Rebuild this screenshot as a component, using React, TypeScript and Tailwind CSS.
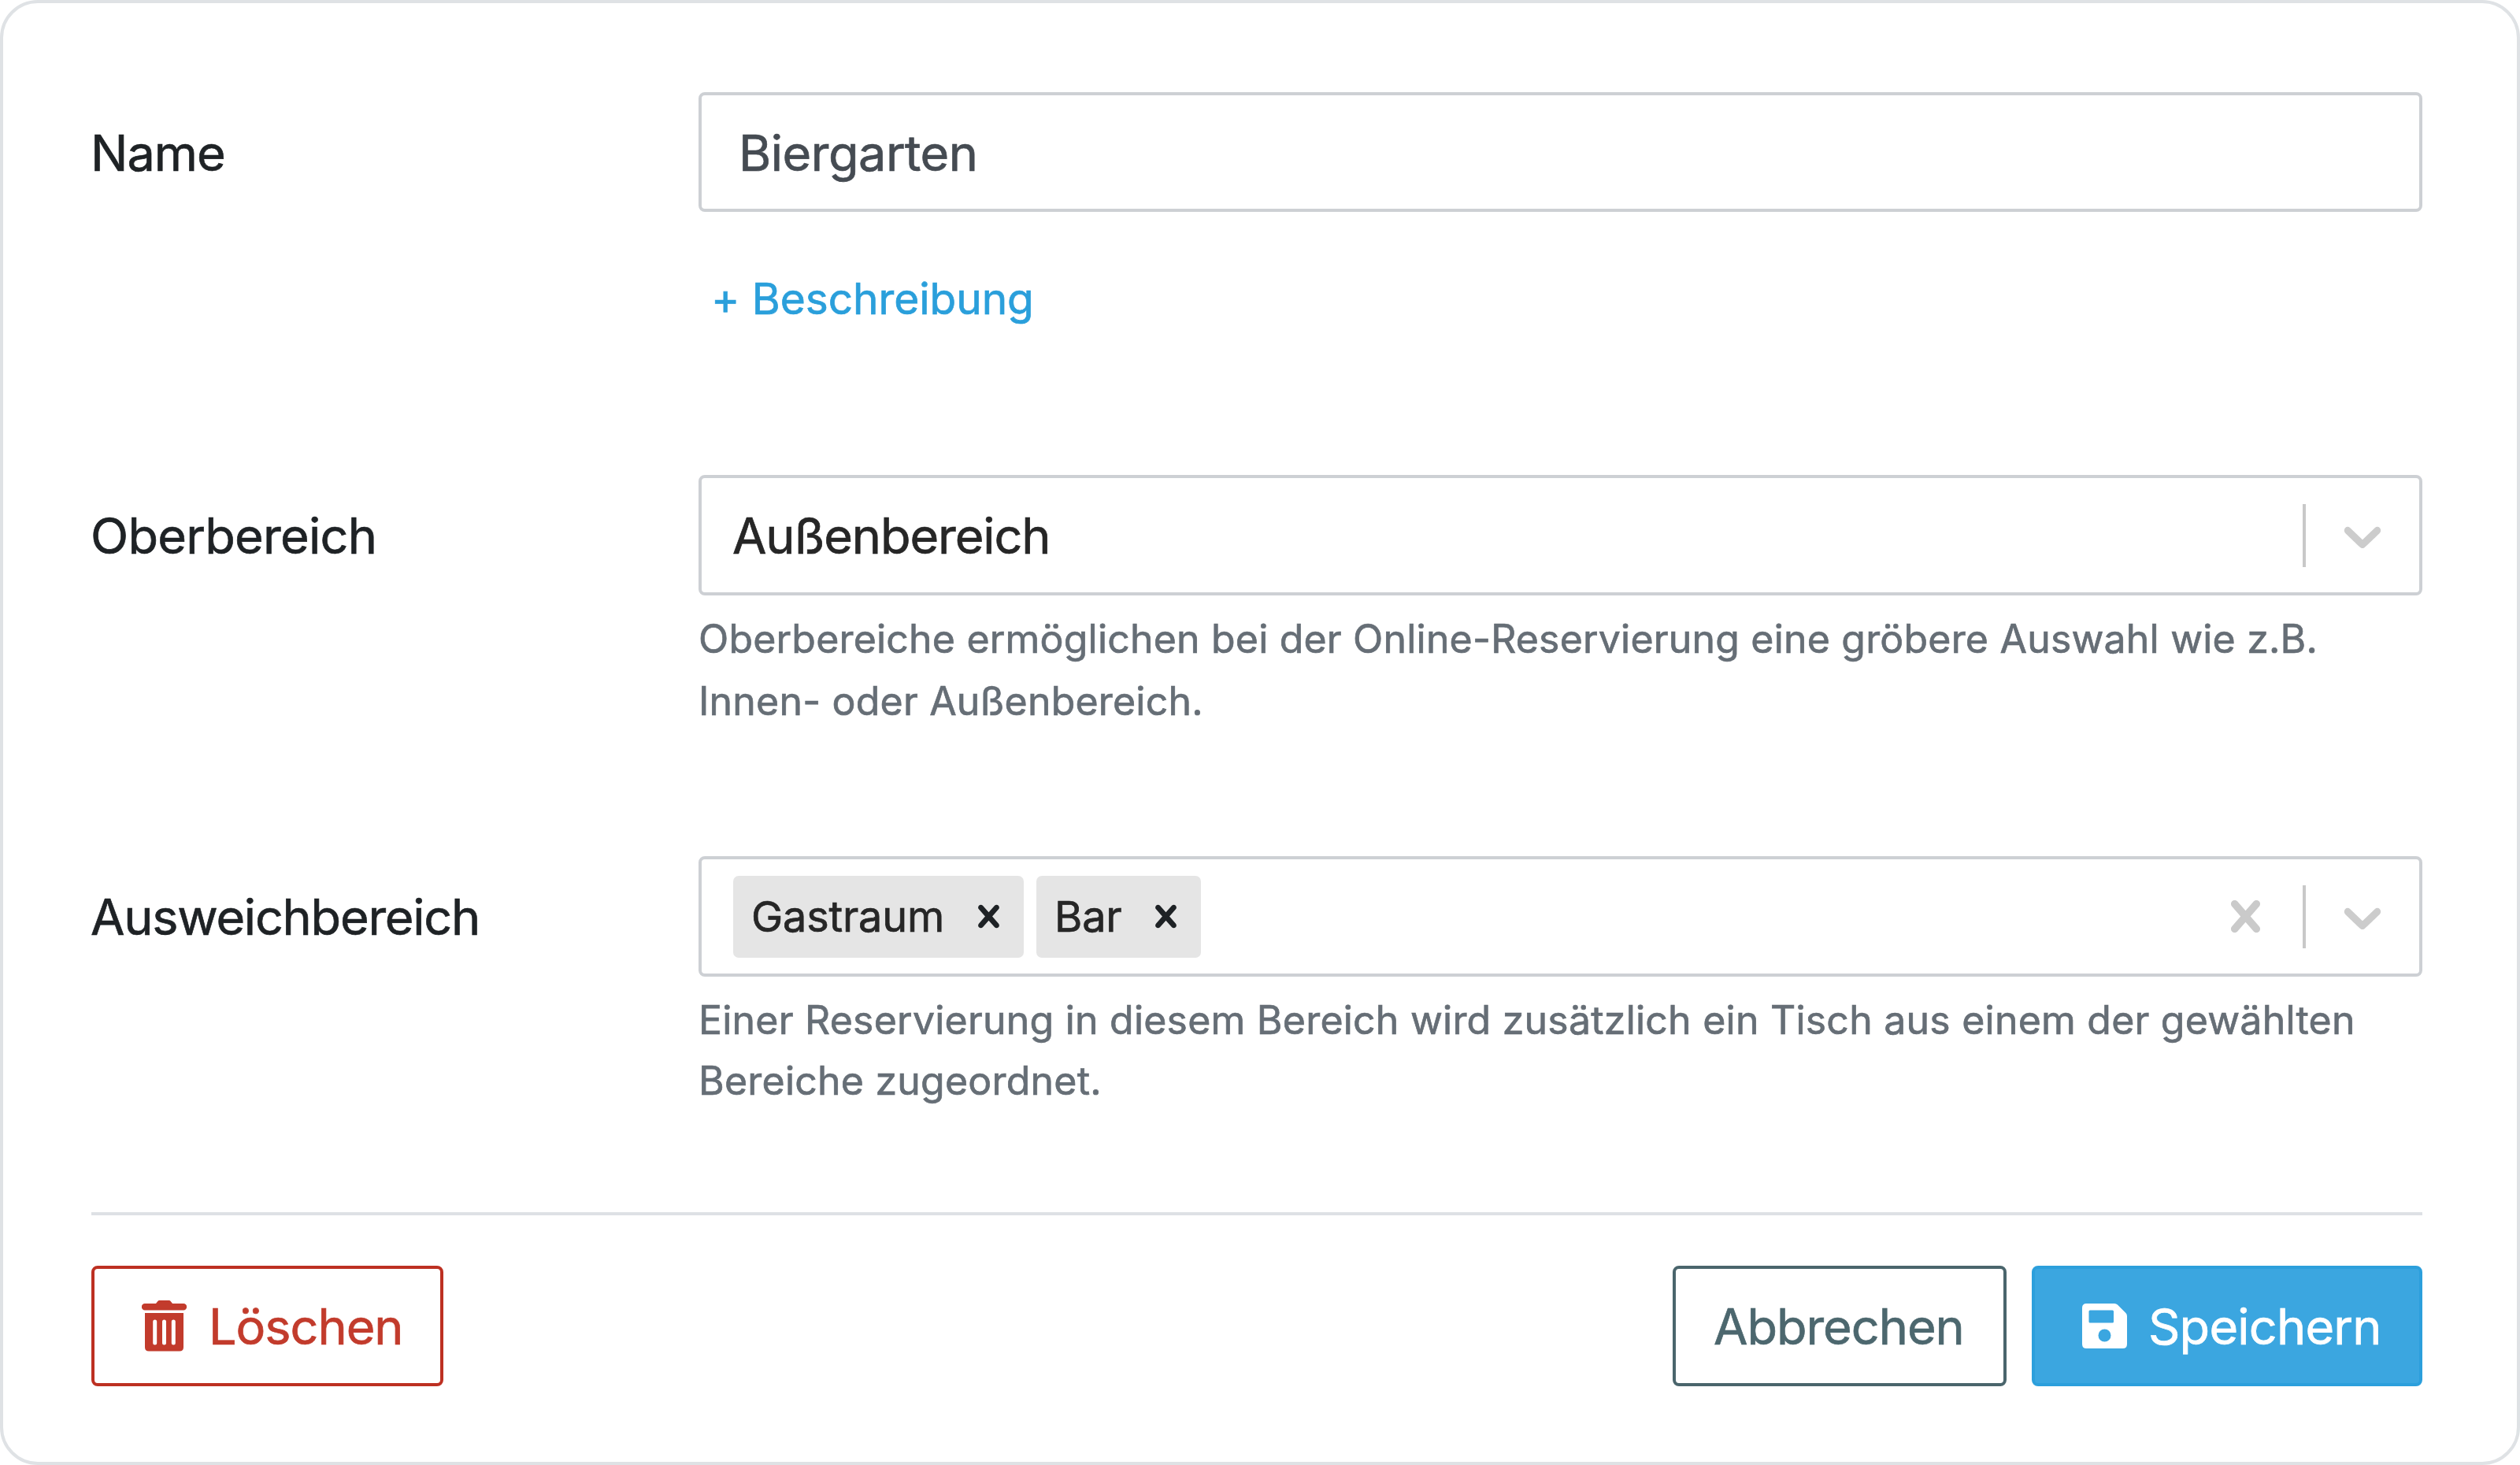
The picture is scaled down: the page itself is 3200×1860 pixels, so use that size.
import type { ReactNode } from "react";

interface FormRowProps {
  label: string;
  /** Height and label spacing of the row. */
  className: string;
  children: ReactNode;
}

function FormRow({ label, className, children }: FormRowProps) {
  return (
    <div className={`flex shrink-0 ${className}`}>
      <label className="-ml-[1px] flex h-[152px] w-[772px] shrink-0 items-center pt-[2px] text-[63px] leading-none text-[#1e2225]">
        {label}
      </label>
      <div className="flex min-w-0 grow flex-col">{children}</div>
    </div>
  );
}

function CrossIcon({ className }: { className: string }) {
  return (
    <svg viewBox="0 0 20 20" className={className} fill="currentColor" aria-hidden="true">
      <path d="M14.348 14.849c-0.469 0.469-1.229 0.469-1.697 0l-2.651-3.030-2.651 3.029c-0.469 0.469-1.229 0.469-1.697 0-0.469-0.469-0.469-1.229 0-1.697l2.758-3.15-2.759-3.152c-0.469-0.469-0.469-1.228 0-1.697s1.228-0.469 1.697 0l2.652 3.031 2.651-3.031c0.469-0.469 1.228-0.469 1.697 0s0.469 1.229 0 1.697l-2.758 3.152 2.758 3.15c0.469 0.469 0.469 1.229 0 1.698z" />
    </svg>
  );
}

function ChevronIcon({ className }: { className: string }) {
  return (
    <svg viewBox="0 0 20 20" className={className} fill="currentColor" aria-hidden="true">
      <path d="M4.516 7.548c0.436-0.446 1.043-0.481 1.576 0l3.908 3.747 3.908-3.747c0.533-0.481 1.141-0.446 1.574 0 0.436 0.445 0.408 1.197 0 1.615-0.406 0.418-4.695 4.502-4.695 4.502-0.217 0.223-0.502 0.335-0.787 0.335s-0.57-0.112-0.789-0.335c0 0-4.287-4.084-4.695-4.502s-0.436-1.17 0-1.615z" />
    </svg>
  );
}

function TrashIcon() {
  return (
    <svg viewBox="0 0 57 65" className="h-[65px] w-[57px] shrink-0" fill="currentColor" aria-hidden="true">
      <path d="M4 4h14l2.2-2.8Q21 0 22.500 0h12Q36 0 36.800 1.200L39 4h14a4.200 4.200 0 0 1 0 8.400H4A4.200 4.200 0 0 1 4 4z" />
      <path
        fillRule="evenodd"
        d="M4 16h49v43.500q0 5-5 5H9q-5 0-5-5zM16.700 24.500a2.500 2.500 0 0 0-2.500 2.500v27a2.500 2.500 0 0 0 5 0V27a2.500 2.500 0 0 0-2.500-2.500zM28.500 24.500A2.500 2.500 0 0 0 26 27v27a2.500 2.500 0 0 0 5 0V27a2.500 2.500 0 0 0-2.500-2.500zM40.300 24.500a2.500 2.500 0 0 0-2.500 2.500v27a2.500 2.500 0 0 0 5 0V27a2.500 2.500 0 0 0-2.500-2.500z"
      />
    </svg>
  );
}

function SaveIcon() {
  return (
    <svg viewBox="0 0 57 57" className="size-[57px] shrink-0" fill="currentColor" aria-hidden="true">
      <path
        fillRule="evenodd"
        d="M5.500 0H41q2.300 0 3.900 1.600L55.400 12.100Q57 13.700 57 16v35.500q0 5.500-5.500 5.500h-46Q0 57 0 51.500v-46Q0 0 5.500 0zM10 8.500q-1.500 0-1.500 1.500v13q0 1.500 1.500 1.500h28.500q1.500 0 1.500-1.500V10q0-1.500-1.500-1.500zM28.500 32.500a8 8 0 1 0 0 16 8 8 0 0 0 0-16z"
      />
    </svg>
  );
}

interface SelectProps {
  clearable?: boolean;
  children: ReactNode;
}

function Select({ clearable, children }: SelectProps) {
  return (
    <div className="flex h-[153px] shrink-0 items-center rounded-[8px] border-4 border-[#cdd0d4] bg-white pl-[40px] pr-[32px]">
      <div className="flex grow items-center">{children}</div>
      {clearable && <CrossIcon className="mr-[33px] size-[79px] text-[#cacaca]" />}
      <span className="h-[80px] w-[4px] bg-[#c8c8c8]" />
      <ChevronIcon className="ml-[32px] size-[80px] text-[#cccccc]" />
    </div>
  );
}

function Tag({ children }: { children: ReactNode }) {
  return (
    <span className="flex h-[104px] items-center rounded-[7px] bg-[#e5e5e5] pl-[23px] pr-[16px] text-[54px] leading-none text-[#262626]">
      <span className="pt-[1px]">{children}</span>
      <CrossIcon className="ml-[28px] size-[57px] text-[#1e2225]" />
    </span>
  );
}

export default function App() {
  return (
    <main className="flex h-[1860px] w-[3200px] flex-col rounded-[48px] border-4 border-[#dfe2e5] bg-white pl-[112px] pr-[120px] pt-[113px] font-['Inter',sans-serif] font-normal [-webkit-text-stroke-width:0.7px]">
      <FormRow label="Name" className="h-[486px] tracking-[-1px]">
        <input
          className="h-[152px] rounded-[8px] border-4 border-[#cdd0d4] pl-[47px] pt-[1px] text-[63px] tracking-[-0.5px] text-[#454b52] outline-none"
          defaultValue="Biergarten"
        />
        <a className="ml-[16px] mt-[82px] self-start text-[55px] leading-[56px] tracking-[-0.05px] text-[#2a9fdb]">
          + Beschreibung
        </a>
      </FormRow>

      <FormRow label="Oberbereich" className="h-[484px] tracking-[-0.75px]">
        <Select>
          <span className="-ml-[1px] pt-[1px] text-[63px] leading-none tracking-[-1.1px] text-[#262626]">
            Außenbereich
          </span>
        </Select>
        <p className="mt-[16px] text-[50px] leading-[78.500px] tracking-[0.19px] text-[#666e76]">
          Oberbereiche ermöglichen bei der Online-Reservierung eine gröbere Auswahl wie z.B.
          <br />
          Innen- oder Außenbereich.
        </p>
      </FormRow>

      <FormRow label="Ausweichbereich" className="h-[452px] tracking-[-1.25px]">
        <Select clearable>
          <div className="flex gap-[16px] tracking-[-0.2px]">
            <Tag>Gastraum</Tag>
            <Tag>Bar</Tag>
          </div>
        </Select>
        <p className="mt-[17px] text-[50px] leading-[76.500px] tracking-[0.22px] text-[#666e76]">
          Einer Reservierung in diesem Bereich wird zusätzlich ein Tisch aus einem der gewählten
          <br />
          Bereiche zugeordnet.
        </p>
      </FormRow>

      <hr className="shrink-0 border-t-4 border-[#dee1e5]" />

      <div className="mt-[64px] flex h-[153px] shrink-0 text-[63px] leading-none tracking-[-1.05px]">
        <button className="flex w-[447px] items-center rounded-[8px] border-4 border-[#bd3022] pl-[60px] text-[#c23b2c]">
          <TrashIcon />
          <span className="ml-[28px] pt-[1px]">Löschen</span>
        </button>
        <button className="ml-auto flex w-[424px] items-center rounded-[8px] border-4 border-[#4a656c] pl-[48px] text-[#4c676e]">
          <span className="pt-[1px]">Abbrechen</span>
        </button>
        <button className="ml-[32px] flex w-[496px] items-center rounded-[8px] border-4 border-[#2c9fdc] bg-[#3ba6e0] pl-[60px] tracking-[-0.8px] text-white">
          <SaveIcon />
          <span className="ml-[27px] pt-[1px]">Speichern</span>
        </button>
      </div>
    </main>
  );
}
